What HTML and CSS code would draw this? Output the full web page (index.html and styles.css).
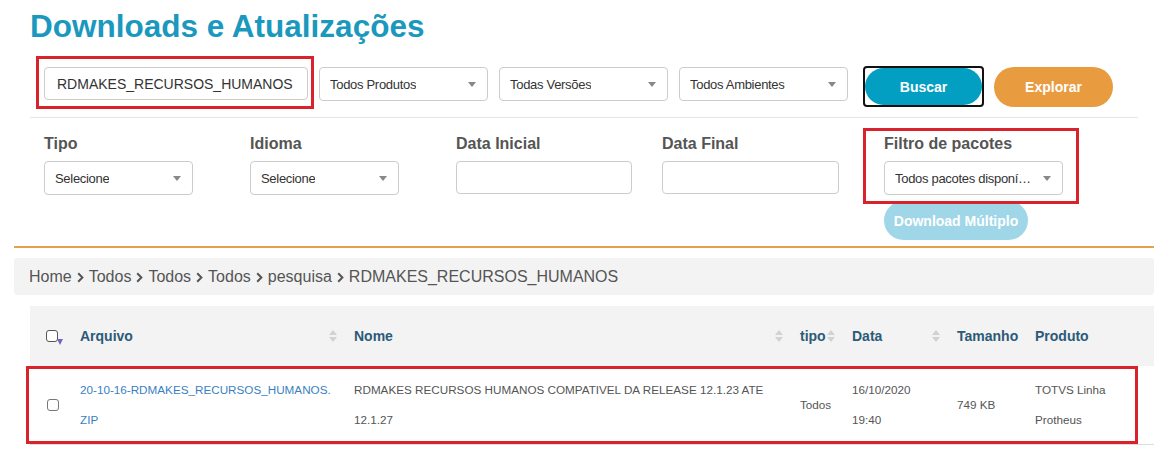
FILE: index.html
```html
<!DOCTYPE html>
<html lang="pt-BR">
<head>
<meta charset="utf-8">
<title>Downloads e Atualizações</title>
<link rel="stylesheet" href="styles.css">
</head>
<body>
<div class="page">
  <h1 class="title">Downloads e Atualizações</h1>

  <div class="search-row">
    <div class="search-field">
      <div class="text-input search-input">RDMAKES_RECURSOS_HUMANOS</div>
      <div class="mark mark-search"></div>
    </div>
    <div class="select wide"><span class="select-text">Todos Produtos</span><span class="caret"></span></div>
    <div class="select wide"><span class="select-text">Todas Versões</span><span class="caret"></span></div>
    <div class="select wide"><span class="select-text">Todos Ambientes</span><span class="caret"></span></div>
    <div class="btn-focus"><div class="btn btn-primary">Buscar</div></div>
    <div class="btn btn-explore">Explorar</div>
  </div>

  <div class="divider"></div>

  <div class="filters">
    <div class="field">
      <div class="label">Tipo</div>
      <div class="select small"><span class="select-text">Selecione</span><span class="caret"></span></div>
    </div>
    <div class="field">
      <div class="label">Idioma</div>
      <div class="select small"><span class="select-text">Selecione</span><span class="caret"></span></div>
    </div>
    <div class="field">
      <div class="label">Data Inicial</div>
      <div class="text-input date-input"></div>
    </div>
    <div class="field">
      <div class="label">Data Final</div>
      <div class="text-input date-input date-final"></div>
    </div>
    <div class="field field-pack">
      <div class="label">Filtro de pacotes</div>
      <div class="select pack"><span class="select-text">Todos pacotes disponí…</span><span class="caret"></span></div>
      <div class="btn btn-multi">Download Múltiplo</div>
      <div class="mark mark-pack"></div>
    </div>
  </div>

  <div class="rule"></div>

  <nav class="crumbs">
    <span>Home</span>
    <svg class="chev" width="7" height="11" viewBox="0 0 7 11"><path d="M1.2 1.2 5.4 5.5 1.2 9.8" fill="none" stroke="#555" stroke-width="2"/></svg>
    <span>Todos</span>
    <svg class="chev" width="7" height="11" viewBox="0 0 7 11"><path d="M1.2 1.2 5.4 5.5 1.2 9.8" fill="none" stroke="#555" stroke-width="2"/></svg>
    <span>Todos</span>
    <svg class="chev" width="7" height="11" viewBox="0 0 7 11"><path d="M1.2 1.2 5.4 5.5 1.2 9.8" fill="none" stroke="#555" stroke-width="2"/></svg>
    <span>Todos</span>
    <svg class="chev" width="7" height="11" viewBox="0 0 7 11"><path d="M1.2 1.2 5.4 5.5 1.2 9.8" fill="none" stroke="#555" stroke-width="2"/></svg>
    <span>pesquisa</span>
    <svg class="chev" width="7" height="11" viewBox="0 0 7 11"><path d="M1.2 1.2 5.4 5.5 1.2 9.8" fill="none" stroke="#555" stroke-width="2"/></svg>
    <span>RDMAKES_RECURSOS_HUMANOS</span>
  </nav>

  <div class="table-wrap">
    <table class="files">
      <colgroup>
        <col class="c-check"><col class="c-file"><col class="c-name"><col class="c-type"><col class="c-date"><col class="c-size"><col class="c-prod">
      </colgroup>
      <thead>
        <tr>
          <th class="check-cell">
            <span class="head-check"><span class="box"></span><span class="drop"></span></span>
          </th>
          <th><div class="th-in"><span>Arquivo</span><span class="sort"></span></div></th>
          <th><div class="th-in"><span>Nome</span><span class="sort"></span></div></th>
          <th><div class="th-in th-tight"><span>tipo</span><span class="sort"></span></div></th>
          <th><div class="th-in"><span>Data</span><span class="sort"></span></div></th>
          <th><div class="th-in"><span>Tamanho</span></div></th>
          <th><div class="th-in"><span>Produto</span></div></th>
        </tr>
      </thead>
      <tbody>
        <tr>
          <td class="check-cell"><span class="row-check"></span></td>
          <td><a class="file-link">20-10-16-RDMAKES_RECURSOS_HUMANOS.<br>ZIP</a></td>
          <td>RDMAKES RECURSOS HUMANOS COMPATIVEL DA RELEASE 12.1.23 ATE<br>12.1.27</td>
          <td>Todos</td>
          <td>16/10/2020<br>19:40</td>
          <td>749 KB</td>
          <td>TOTVS Linha<br>Protheus</td>
        </tr>
      </tbody>
    </table>
    <div class="mark mark-row"></div>
  </div>
</div>
</body>
</html>
```

FILE: styles.css
```css
* {
  box-sizing: border-box;
}

body {
  margin: 0;
  background: #fff;
  font-family: "Liberation Sans", Arial, sans-serif;
  color: #555;
}

.page {
  padding: 0 8px 0 14px;
}

.title {
  margin: 8px 0 0 16px;
  font-size: 31.5px;
  line-height: 36px;
  font-weight: bold;
  color: #1b98bd;
}

/* highlight frames drawn over the controls */
.mark {
  position: absolute;
  border: 3px solid #d8232c;
  pointer-events: none;
}

/* search bar */
.search-row {
  display: flex;
  align-items: flex-start;
  gap: 11px;
  margin-top: 23px;
  padding-left: 30px;
}

.search-field {
  position: relative;
}

.text-input {
  height: 33px;
  border: 1px solid #ccc;
  border-radius: 4px;
  background: #fff;
}

.search-input {
  width: 264px;
  display: flex;
  align-items: center;
  padding-left: 12px;
  font-size: 14px;
  color: #333;
}

.mark-search {
  left: -8px;
  top: -11px;
  width: 278px;
  height: 53px;
}

.select {
  height: 34px;
  border: 1px solid #ccc;
  border-radius: 4px;
  background: #fff;
  display: flex;
  align-items: center;
  justify-content: space-between;
  padding: 0 11px 0 10px;
  font-size: 13px;
  letter-spacing: -0.3px;
  color: #333;
}

.select-text {
  white-space: nowrap;
  overflow: hidden;
  min-width: 0;
}

.caret {
  flex: none;
  margin-left: 8px;
  width: 0;
  height: 0;
  border-left: 4px solid transparent;
  border-right: 4px solid transparent;
  border-top: 5px solid #888;
}

.select.wide {
  width: 169px;
}

.select.small {
  width: 149px;
}

.select.pack {
  width: 179px;
}

.btn {
  display: flex;
  align-items: center;
  justify-content: center;
  color: #fff;
  font-weight: bold;
  font-size: 14px;
}

.btn-focus {
  margin: -1px 0 0 4px;
  border: 2px solid #111;
  border-radius: 4px;
}

.btn-primary {
  width: 117px;
  height: 37px;
  border-radius: 19px;
  background: #029fc3;
}

.btn-explore {
  width: 119px;
  height: 40px;
  margin-left: -1px;
  border-radius: 20px;
  background: #e99c3f;
}

.divider {
  width: 1108px;
  height: 1px;
  margin: 10px 0 0 16px;
  background: #e6e6e6;
}

/* filter fields */
.filters {
  display: flex;
  align-items: flex-start;
  margin-top: 17px;
  padding-left: 30px;
}

.field {
  width: 206px;
}

.field-pack {
  position: relative;
  width: auto;
  margin-left: 16px;
}

.label {
  margin-bottom: 8px;
  font-size: 16px;
  line-height: 18px;
  font-weight: bold;
  color: #555;
}

.date-input {
  width: 176px;
}

.date-final {
  width: 177px;
}

.btn-multi {
  width: 144px;
  height: 39px;
  margin-top: 6px;
  border-radius: 20px;
  background: #9fd7e8;
}

.mark-pack {
  left: -21px;
  top: -7px;
  width: 216px;
  height: 76px;
}

.rule {
  height: 2px;
  margin-top: 6px;
  background: #e79f49;
}

/* breadcrumb */
.crumbs {
  display: flex;
  align-items: center;
  height: 37px;
  margin-top: 10px;
  padding-left: 15px;
  border-radius: 4px;
  background: #f3f3f3;
  font-size: 16px;
  color: #555;
}

.chev {
  margin: 1px 5px 0 5px;
}

/* results table */
.table-wrap {
  position: relative;
  margin: 11px 0 0 16px;
}

.files {
  width: 1124px;
  border-collapse: collapse;
  table-layout: fixed;
}

.c-check { width: 42px; }
.c-file { width: 274px; }
.c-name { width: 446px; }
.c-type { width: 52px; }
.c-date { width: 105px; }
.c-size { width: 78px; }
.c-prod { width: 127px; }

.files th {
  height: 60px;
  padding: 0 0 0 8px;
  background: #f3f3f3;
  text-align: left;
  font-size: 14px;
  font-weight: bold;
  color: #2c5a78;
}

.th-in {
  display: flex;
  align-items: center;
  justify-content: space-between;
  padding-right: 9px;
}

.th-tight {
  justify-content: flex-start;
  gap: 1px;
}

.sort {
  display: flex;
  flex-direction: column;
  gap: 2px;
}

.sort::before,
.sort::after {
  content: "";
  width: 0;
  height: 0;
  border-left: 4px solid transparent;
  border-right: 4px solid transparent;
}

.sort::before {
  border-bottom: 5px solid #d2d2d2;
}

.sort::after {
  border-top: 5px solid #d2d2d2;
}

.files th.check-cell,
.files td.check-cell {
  padding: 0 0 0 16px;
}

.head-check {
  display: flex;
  align-items: flex-end;
}

.head-check .box {
  width: 12px;
  height: 12px;
  border: 1.5px solid #555;
  border-radius: 3px;
  background: #fff;
}

.head-check .drop {
  margin: 0 0 -3px -1px;
  width: 0;
  height: 0;
  border-left: 3.5px solid transparent;
  border-right: 3.5px solid transparent;
  border-top: 6px solid #7466c4;
}

.row-check {
  display: block;
  margin-left: 1px;
  width: 12px;
  height: 12px;
  border: 1px solid #777;
  border-radius: 3px;
  background: #fff;
}

.files td {
  padding: 9px 8px;
  border-bottom: 1px solid #ddd;
  vertical-align: middle;
  font-size: 11.7px;
  line-height: 30px;
  color: #555;
}

.file-link {
  color: #3a7fc2;
  text-decoration: none;
}

.mark-row {
  left: -4px;
  top: 60px;
  width: 1112px;
  height: 78px;
}
```
